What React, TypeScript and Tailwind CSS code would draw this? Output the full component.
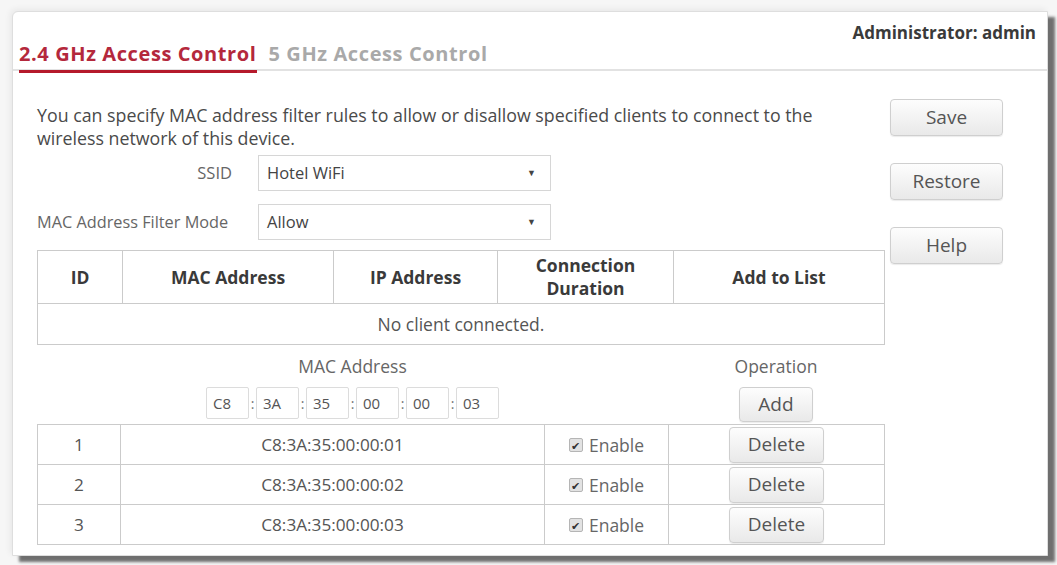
const font = { fontFamily: '"Open Sans", "Noto Sans", Arial, sans-serif' };

function Btn({ label, className }: { label: string; className: string }) {
  return (
    <button
      className={`rounded-[4px] border border-[#cfcfcf] bg-gradient-to-b from-[#fdfdfd] to-[#e9e9e9] text-[#555] shadow-[0_1px_1px_rgba(0,0,0,0.08)] ${className}`}
    >
      {label}
    </button>
  );
}

function Select({ value }: { value: string }) {
  return (
    <div className="flex h-[36px] w-[293px] items-center justify-between border border-[#d6d6d6] bg-white pl-[8px] pr-[14px] text-[16.5px] text-[#444]">
      <span>{value}</span>
      <span className="text-[9px] text-[#444]">▼</span>
    </div>
  );
}

const rules = ["C8:3A:35:00:00:01", "C8:3A:35:00:00:02", "C8:3A:35:00:00:03"];
const macParts = ["C8", "3A", "35", "00", "00", "03"];

export default function App() {
  return (
    <div className="h-[565px] w-[1057px] overflow-hidden bg-[#f6f6f6] pl-[12px] pt-[11px]" style={font}>
      <div className="h-[545px] w-[1036px] rounded-tl-[6px] border border-[#dedede] bg-white shadow-[7px_6px_3px_rgba(0,0,0,0.55),-2px_-2px_6px_rgba(0,0,0,0.06)]">
        {/* header with tabs */}
        <div className="flex h-[59px] items-start justify-between border-b-2 border-[#e2e2e2] pl-[6px] pr-[11px]">
          <div className="flex items-end gap-[12px] pt-[27px]">
            <div className="border-b-[3px] border-[#b5192b] pb-[1px] text-[20px] font-bold tracking-[0.6px] text-[#b4283c]">
              2.4 GHz Access Control
            </div>
            <div className="pb-[4px] text-[20px] font-bold tracking-[0.6px] text-[#a9a9a9]">5 GHz Access Control</div>
          </div>
          <div className="pt-[8px] text-[17px] font-bold text-[#3a3a3a]">Administrator: admin</div>
        </div>

        <div className="flex pl-[24px]">
          {/* left column */}
          <div className="w-[847px] pt-[33px]">
            <p className="text-[17.8px] leading-[23px] text-[#4a4a4a]">
              You can specify MAC address filter rules to allow or disallow specified clients to connect to the
              <br />
              wireless network of this device.
            </p>
            <div className="mt-[5px] flex items-center">
              <div className="w-[195px] text-right text-[16.5px] text-[#666]">SSID</div>
              <div className="ml-[26px]">
                <Select value="Hotel WiFi" />
              </div>
            </div>
            <div className="mt-[13px] flex items-center">
              <div className="w-[200px] text-[16.3px] text-[#666]">MAC Address Filter Mode</div>
              <div className="ml-[21px]">
                <Select value="Allow" />
              </div>
            </div>

            <table className="mt-[10px] w-[847px] table-fixed border-collapse text-center text-[17.5px]">
              <colgroup>
                <col className="w-[85px]" />
                <col className="w-[211px]" />
                <col className="w-[164px]" />
                <col className="w-[176px]" />
                <col className="w-[211px]" />
              </colgroup>
              <thead>
                <tr className="h-[53px] font-bold text-[#3a3a3a]">
                  <th className="border border-[#cbcbcb]">ID</th>
                  <th className="border border-[#cbcbcb]">MAC Address</th>
                  <th className="border border-[#cbcbcb]">IP Address</th>
                  <th className="border border-[#cbcbcb] leading-[23px]">
                    Connection
                    <br />
                    Duration
                  </th>
                  <th className="border border-[#cbcbcb]">Add to List</th>
                </tr>
              </thead>
              <tbody>
                <tr className="h-[41px] text-[#555]">
                  <td colSpan={5} className="border border-[#cbcbcb]">
                    No client connected.
                  </td>
                </tr>
              </tbody>
            </table>

            {/* add rule */}
            <div className="flex">
              <div className="flex w-[631px] flex-col items-center">
                <div className="flex h-[42px] items-center text-[17.5px] text-[#666]">MAC Address</div>
                <div className="flex items-center">
                  {macParts.map((p, i) => (
                    <div key={i} className="flex items-center">
                      {i > 0 && <span className="w-[7px] text-center text-[14px] text-[#777]">:</span>}
                      <div className="flex h-[32px] w-[43px] items-center rounded-[2px] border border-[#dcdcdc] pl-[6px] text-[15px] text-[#555]">
                        {p}
                      </div>
                    </div>
                  ))}
                </div>
              </div>
              <div className="flex w-[216px] flex-col items-center">
                <div className="flex h-[42px] items-center text-[17.5px] text-[#666]">Operation</div>
                <Btn label="Add" className="h-[35px] w-[74px] text-[19px]" />
              </div>
            </div>

            <table className="mt-[2px] w-[847px] table-fixed border-collapse text-center text-[17.2px] text-[#555]">
              <colgroup>
                <col className="w-[83px]" />
                <col className="w-[424px]" />
                <col className="w-[124px]" />
                <col className="w-[216px]" />
              </colgroup>
              <tbody>
                {rules.map((mac, i) => (
                  <tr key={mac} className="h-[40px]">
                    <td className="border border-[#cbcbcb]">{i + 1}</td>
                    <td className="border border-[#cbcbcb]">{mac}</td>
                    <td className="border border-[#cbcbcb]">
                      <span className="inline-flex items-center gap-[6px] text-[17.5px] text-[#666]">
                        <span className="flex h-[14px] w-[14px] items-center justify-center rounded-[2px] border border-[#b5b5b5] bg-[#e2e2e2] text-[11px] leading-none text-[#333]">
                          ✔
                        </span>
                        Enable
                      </span>
                    </td>
                    <td className="border border-[#cbcbcb] py-0">
                      <div className="flex justify-center">
                        <Btn label="Delete" className="h-[36px] w-[95px] text-[19px]" />
                      </div>
                    </td>
                  </tr>
                ))}
              </tbody>
            </table>
          </div>

          {/* right column */}
          <div className="ml-[6px] flex flex-col gap-[27px] pt-[28px]">
            <Btn label="Save" className="h-[37px] w-[113px] text-[19px]" />
            <Btn label="Restore" className="h-[37px] w-[113px] text-[19px]" />
            <Btn label="Help" className="h-[37px] w-[113px] text-[19px]" />
          </div>
        </div>
      </div>
    </div>
  );
}
